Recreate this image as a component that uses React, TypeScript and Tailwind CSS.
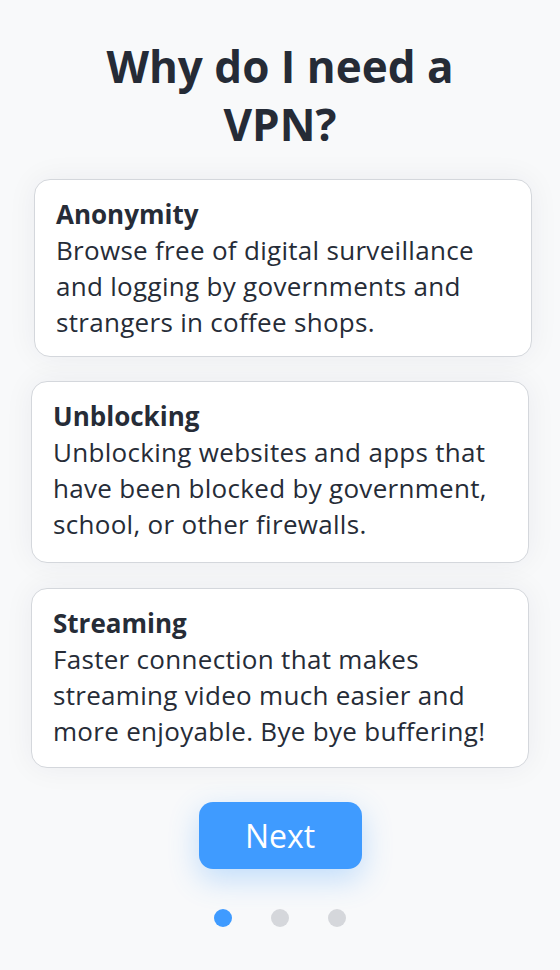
import React from "react";

const cards = [
  {
    title: "Anonymity",
    lines: ["Browse free of digital surveillance", "and logging by governments and", "strangers in coffee shops."],
    cls: "ml-[34px] mr-[28px] h-[178px]",
  },
  {
    title: "Unblocking",
    lines: ["Unblocking websites and apps that", "have been blocked by government,", "school, or other firewalls."],
    cls: "ml-[31px] mr-[31px] h-[182px] mt-[24px]",
  },
  {
    title: "Streaming",
    lines: ["Faster connection that makes", "streaming video much easier and", "more enjoyable. Bye bye buffering!"],
    cls: "ml-[31px] mr-[31px] h-[180px] mt-[25px]",
  },
];

export default function App() {
  return (
    <div
      className="w-[560px] h-[970px] bg-[#f8f9fa] flex flex-col text-[#262c37] overflow-hidden"
      style={{ fontFamily: "'Open Sans', 'Noto Sans', sans-serif" }}
    >
      <h1 className="mt-[37px] text-center font-bold text-[44px] leading-[58px] text-[#252b36]">
        Why do I need a<br />VPN?
      </h1>
      <div className="mt-[26px] flex flex-col">
        {cards.map((c) => (
          <div
            key={c.title}
            className={`${c.cls} bg-white border border-[#d4d7dc] rounded-[16px] px-[21px] pt-[16px] shadow-[0_0_30px_rgba(30,40,60,0.06)] whitespace-nowrap`}
          >
            <div className="font-bold text-[26px] leading-[36px]">{c.title}</div>
            {c.lines.map((l) => (
              <div key={l} className="text-[26px] leading-[36px] tracking-[0.3px]">{l}</div>
            ))}
          </div>
        ))}
      </div>
      <div className="mt-[34px] flex justify-center">
        <button className="w-[163px] h-[67px] rounded-[14px] bg-[#3f9bff] text-white text-[32px] shadow-[0_10px_30px_rgba(63,155,255,0.3)]">
          Next
        </button>
      </div>
      <div className="mt-[40px] flex justify-center gap-[39px]">
        <span className="w-[18px] h-[18px] rounded-full bg-[#3f9bff]" />
        <span className="w-[18px] h-[18px] rounded-full bg-[#d5d7db]" />
        <span className="w-[18px] h-[18px] rounded-full bg-[#d5d7db]" />
      </div>
    </div>
  );
}
